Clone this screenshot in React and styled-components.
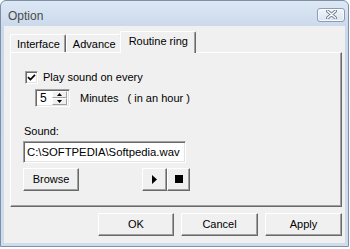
import React from 'react';
import styled, { createGlobalStyle } from 'styled-components';

const Global = createGlobalStyle`
  html, body { margin: 0; padding: 0; background: #ffffff; }
  body { font-family: "Liberation Sans", Arial, sans-serif; font-size: 11px; color: #000; }
  * { box-sizing: border-box; }
`;

const Window = styled.div`
  width: 349px;
  height: 247px;
  border: 1px solid #7f8fa6;
  border-radius: 6px 6px 0 0;
  background: linear-gradient(#dde8f5, #cad9eb 26px, #cfdcec);
  display: flex;
  flex-direction: column;
`;

const TitleBar = styled.div`
  height: 25px;
  flex: none;
  display: flex;
  align-items: center;
  justify-content: space-between;
  padding: 0 3px 0 7px;
`;

const Title = styled.span`
  font-family: "Liberation Sans", Arial, sans-serif;
  font-size: 12px;
  color: #4a4a4a;
  margin-top: 4px;
`;

const CloseButton = styled.div`
  width: 28px;
  height: 14px;
  margin-top: 2px;
  border: 1px solid #8c9cb2;
  border-radius: 3px;
  background: linear-gradient(#f3f6fa, #dbe4ef);
  box-shadow: inset 0 0 0 1px rgba(255,255,255,0.7);
  display: flex;
  align-items: center;
  justify-content: center;
`;

const Client = styled.div`
  flex: 1;
  margin: 0 3px 3px 3px;
  background: #f0f0f0;
  display: flex;
  flex-direction: column;
  padding: 5px 3px 7px 6px;
`;

const TabRow = styled.div`
  display: flex;
  align-items: flex-end;
  height: 21px;
  position: relative;
  z-index: 1;
`;

const Tab = styled.div`
  height: ${p => (p.$active ? '22px' : '18px')};
  margin: ${p => (p.$active ? '0 0 -1px -2px' : '0')};
  padding: ${p => (p.$active ? '3px 7px 0 8px' : '3px 5px 0 6px')};
  background: #f0f0f0;
  border-top: 1px solid #ffffff;
  border-left: 1px solid #ffffff;
  border-right: 1px solid #696969;
  box-shadow: inset -1px 0 0 #a0a0a0;
  border-radius: 2px 2px 0 0;
  white-space: nowrap;
  line-height: 13px;
`;

const Panel = styled.div`
  height: 155px;
  border-top: 1px solid #ffffff;
  border-left: 1px solid #ffffff;
  border-right: 1px solid #696969;
  border-bottom: 1px solid #696969;
  box-shadow: inset -1px -1px 0 #a0a0a0;
  display: flex;
  flex-direction: column;
  padding: 18px 0 0 13px;
`;

const Row = styled.div`
  display: flex;
  align-items: center;
  gap: ${p => p.$gap || 0}px;
  margin-left: ${p => p.$indent || 0}px;
  margin-top: ${p => p.$top || 0}px;
`;

const CheckBox = styled.div`
  width: 13px;
  height: 13px;
  margin-left: 1px;
  background: #ffffff;
  border-top: 1px solid #a0a0a0;
  border-left: 1px solid #a0a0a0;
  border-right: 1px solid #ffffff;
  border-bottom: 1px solid #ffffff;
  box-shadow: inset 1px 1px 0 #696969, inset -1px -1px 0 #e3e3e3;
  display: flex;
  align-items: center;
  justify-content: center;
`;

const Label = styled.span`
  white-space: nowrap;
  line-height: 13px;
  margin-left: ${p => p.$ml || 0}px;
`;

const Sunken = styled.div`
  background: #ffffff;
  border-top: 1px solid #a0a0a0;
  border-left: 1px solid #a0a0a0;
  border-right: 1px solid #ffffff;
  border-bottom: 1px solid #ffffff;
  box-shadow: inset 1px 1px 0 #696969, inset -1px -1px 0 #e3e3e3;
`;

const Spinner = styled(Sunken)`
  width: 35px;
  height: 18px;
  display: flex;
  align-items: center;
  padding: 2px 2px 2px 4px;
  font-size: 12px;
`;

const SpinValue = styled.span`
  flex: 1;
  line-height: 13px;
`;

const SpinStack = styled.div`
  width: 15px;
  height: 14px;
  display: flex;
  flex-direction: column;
`;

const SpinHalf = styled.div`
  flex: 1;
  background: #f0f0f0;
  border-top: 1px solid #ffffff;
  border-left: 1px solid #ffffff;
  border-right: 1px solid #a0a0a0;
  border-bottom: 1px solid #a0a0a0;
  display: flex;
  align-items: center;
  justify-content: center;
`;

const TextField = styled(Sunken)`
  width: 163px;
  height: 22px;
  margin-left: -1px;
  padding: 4px 0 0 3px;
  font-size: 11.3px;
  line-height: 13px;
  white-space: nowrap;
  overflow: hidden;
`;

const Button = styled.div`
  width: ${p => p.$w}px;
  height: 23px;
  background: #f0f0f0;
  border-top: 1px solid #ffffff;
  border-left: 1px solid #ffffff;
  border-right: 1px solid #696969;
  border-bottom: 1px solid #696969;
  box-shadow: inset -1px -1px 0 #a0a0a0;
  display: flex;
  align-items: center;
  justify-content: center;
  font-size: 11px;
  line-height: 13px;
  padding-bottom: 1px;
`;

const MediaGroup = styled.div`
  display: flex;
  margin-left: auto;
  margin-right: 151px;
`;

const Footer = styled.div`
  display: flex;
  justify-content: flex-end;
  gap: 7px;
  margin-top: 6px;
`;

const Arrow = ({ up }) => (
  <svg width="5" height="3" viewBox="0 0 5 3">
    <path d={up ? 'M2.5 0 L5 3 L0 3 Z' : 'M0 0 L5 0 L2.5 3 Z'} fill="#000" />
  </svg>
);

export default function App() {
  return (
    <>
      <Global />
      <Window>
        <TitleBar>
          <Title>Option</Title>
          <CloseButton>
            <svg width="11" height="9" viewBox="0 0 11 9">
              <path d="M1.5 1 L9.5 8 M9.5 1 L1.5 8" stroke="#6f7f95" strokeWidth="3.2" strokeLinecap="round" />
              <path d="M1.5 1 L9.5 8 M9.5 1 L1.5 8" stroke="#ffffff" strokeWidth="1.4" strokeLinecap="round" />
            </svg>
          </CloseButton>
        </TitleBar>
        <Client>
          <TabRow>
            <Tab>Interface</Tab>
            <Tab>Advance</Tab>
            <Tab $active>Routine ring</Tab>
          </TabRow>
          <Panel>
            <Row $gap={5}>
              <CheckBox>
                <svg width="9" height="9" viewBox="0 0 9 9">
                  <path d="M1 4.2 L3.4 6.6 L8 1.8" stroke="#000" strokeWidth="1.7" fill="none" />
                </svg>
              </CheckBox>
              <Label>Play sound on every</Label>
            </Row>
            <Row $indent={11} $top={5} $gap={10}>
              <Spinner>
                <SpinValue>5</SpinValue>
                <SpinStack>
                  <SpinHalf><Arrow up /></SpinHalf>
                  <SpinHalf><Arrow /></SpinHalf>
                </SpinStack>
              </Spinner>
              <Label>Minutes</Label>
              <Label $ml={-1}>( in an hour )</Label>
            </Row>
            <Row $top={18}>
              <Label>Sound:</Label>
            </Row>
            <Row $top={3}>
              <TextField>C:\SOFTPEDIA\Softpedia.wav</TextField>
            </Row>
            <Row $top={5}>
              <Button $w={56} style={{ marginLeft: -1 }}>Browse</Button>
              <MediaGroup>
                <Button $w={25}>
                  <svg width="5" height="9" viewBox="0 0 5 9"><path d="M0 0 L5 4.5 L0 9 Z" fill="#000" /></svg>
                </Button>
                <Button $w={23}>
                  <svg width="8" height="8" viewBox="0 0 8 8"><rect width="8" height="8" fill="#000" /></svg>
                </Button>
              </MediaGroup>
            </Row>
          </Panel>
          <Footer>
            <Button $w={76}>OK</Button>
            <Button $w={77}>Cancel</Button>
            <Button $w={77}>Apply</Button>
          </Footer>
        </Client>
      </Window>
    </>
  );
}
